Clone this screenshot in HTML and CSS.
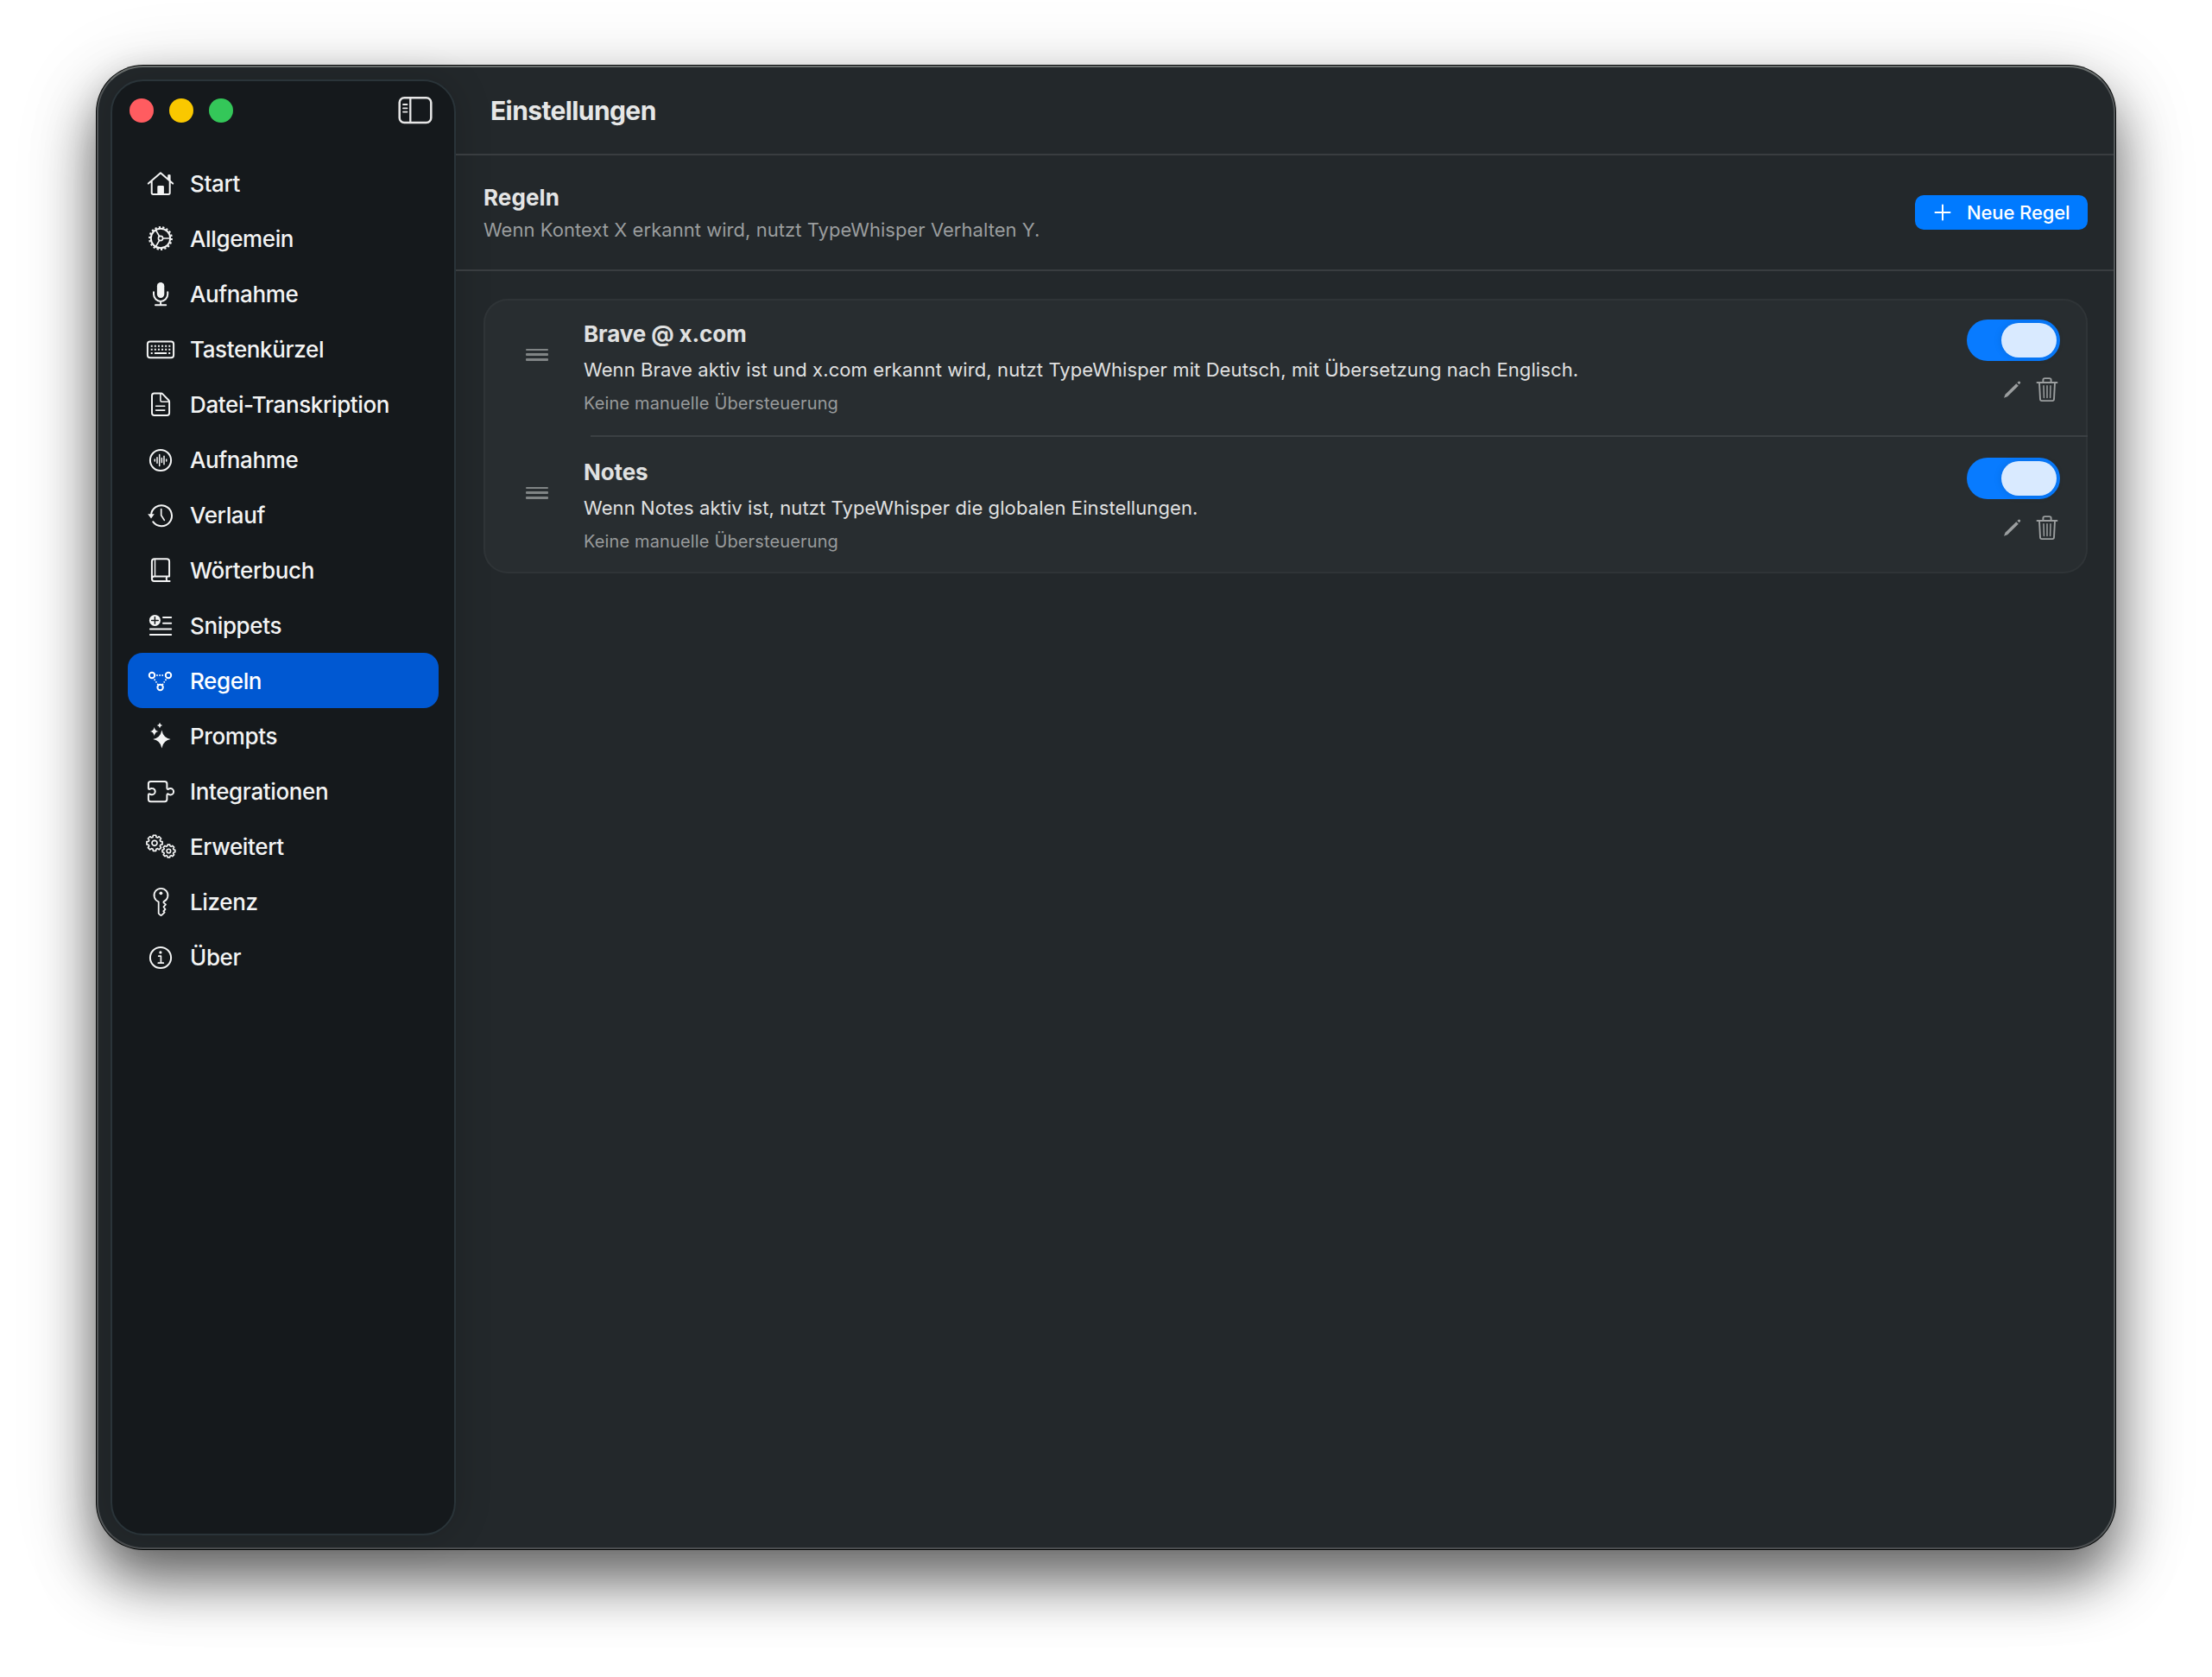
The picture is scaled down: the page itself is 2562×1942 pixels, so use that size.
FILE: index.html
```html
<!DOCTYPE html>
<html lang="de">

<head>
    <meta charset="UTF-8">
    <meta name="viewport" content="width=device-width, initial-scale=1.0">
    <title>Einstellungen</title>
    <link rel="stylesheet" href="styles.css">
</head>

<body>
    <div class="window">
        <aside class="sidebar">
            <div class="titlebar">
                <span class="light red"></span>
                <span class="light yellow"></span>
                <span class="light green"></span>
                <svg class="toggle-sidebar" viewBox="0 0 40 32">
                    <rect x="1.7" y="1.3" width="36.6" height="28.7" rx="5.5" stroke-width="2.5" />
                    <path d="M14.3 2v27.5" stroke-width="2.3" />
                    <path d="M6 9h4.5M6 13.3h4.5M6 17.6h4.5" stroke-width="1.8" />
                </svg>
            </div>

            <nav class="menu">
                <a class="item">
                    <svg class="icon" viewBox="0 0 40 40">
                        <path d="M5.8 20.6 20 8.3l14.2 12.3M9.7 18v13.2q0 1.7 1.7 1.7h17.6q1.7 0 1.7-1.7V18M29.9 16.5v-5.6" />
                        <path class="solid" d="M16.3 33v-8.7q0-1.2 1.2-1.2h5.2q1.2 0 1.2 1.2V33zM28.2 10.4h3.4v8l-3.4-3z" />
                    </svg>
                    <span>Start</span>
                </a>
                <a class="item">
                    <svg class="icon" viewBox="0 0 40 40">
                        <circle cx="20" cy="20" r="11.2" />
                        <circle class="teeth" cx="20" cy="20" r="12.9" pathLength="72" />
                        <circle cx="20" cy="20" r="2.6" stroke-width="1.6" />
                        <path d="M22.8 20h8.2M18.6 17.6l-4.2-7.2M18.6 22.4l-4.2 7.2" stroke-width="1.7" />
                    </svg>
                    <span>Allgemein</span>
                </a>
                <a class="item">
                    <svg class="icon" viewBox="0 0 40 40">
                        <rect class="solid" x="15.9" y="7" width="8.4" height="18" rx="4.2" />
                        <path d="M12 18.2v2.6a8.1 8.1 0 0 0 16.2 0v-2.6M20.1 29v4M14 33.2h12.2" />
                    </svg>
                    <span>Aufnahme</span>
                </a>
                <a class="item">
                    <svg class="icon" viewBox="0 0 40 40">
                        <rect x="4.9" y="11.6" width="30.2" height="18.6" rx="3" />
                        <path class="keys" d="M8.7 16.7h22.6M8.7 20.8h22.6" />
                        <path class="square" d="M8.7 25h2M12.9 25h14.2M29.2 25h2" />
                    </svg>
                    <span>Tastenkürzel</span>
                </a>
                <a class="item">
                    <svg class="icon" viewBox="0 0 40 40">
                        <path d="M12.5 7.6h8q1.2 0 2.2 1l6.4 6.6q1 1 1 2.2v12.9q0 2.7-2.7 2.7H12.7q-2.7 0-2.7-2.7v-20q0-2.7 2.5-2.7z" />
                        <path d="M19.9 8v7.7q0 1.6 1.6 1.6h8.3M14.6 22.3h10.2M14.6 27.1h10.2" stroke-width="1.6" />
                    </svg>
                    <span>Datei-Transkription</span>
                </a>
                <a class="item">
                    <svg class="icon" viewBox="0 0 40 40">
                        <circle cx="20" cy="21" r="12.1" />
                        <path d="M13.3 20v2M16 17.7v6.6M18.7 14.4v13.2M21.4 18.6v4.8M24 16.3v9.4M26.7 20v2" stroke-width="1.5" />
                    </svg>
                    <span>Aufnahme</span>
                </a>
                <a class="item">
                    <svg class="icon" viewBox="0 0 40 40">
                        <path d="M9 20.5a12 12 0 1 1 2.2 7.7" />
                        <path class="solid" d="M5.2 19.3h7.6L9 24.6z" />
                        <path d="M20.7 13.6v7.2l3.6 5.6" stroke-width="1.7" />
                    </svg>
                    <span>Verlauf</span>
                </a>
                <a class="item">
                    <svg class="icon" viewBox="0 0 40 40">
                        <path d="M30.6 32.9H12.5Q9.9 32.9 9.9 30V10.3q0-3 3-3h14.2q3 0 3 3v17.2H12.6q-2.7 0-2.7 2.7M27.3 27.8q-1.3 2.5 0 4.8" />
                        <path d="M13.5 8v19.3" stroke-width="1.5" />
                    </svg>
                    <span>Wörterbuch</span>
                </a>
                <a class="item">
                    <svg class="icon" viewBox="0 0 40 40">
                        <circle class="solid" cx="13.4" cy="14.4" r="6.5" />
                        <path class="cut" d="M13.4 10.6v7.6M9.6 14.4h7.6" />
                        <path d="M23 11.1h9.2M23 17.7h9.2M7.9 24.4h24.3M7.9 31h24.3" />
                    </svg>
                    <span>Snippets</span>
                </a>
                <a class="item active">
                    <svg class="icon" viewBox="0 0 40 40">
                        <circle cx="10" cy="14" r="3.2" />
                        <circle cx="29" cy="14" r="3.2" />
                        <circle cx="19.6" cy="28" r="3.2" />
                        <path class="dots" d="M16 14h8M13.2 19.3l3.6 5.2M26 19.3l-3.6 5.2" />
                    </svg>
                    <span>Regeln</span>
                </a>
                <a class="item">
                    <svg class="icon" viewBox="0 0 40 40">
                        <path class="solid" d="M21.4 13.6q1.6 9 10.2 10.4-8.600 1.400-10.200 10.400-1.600-9-10.200-10.400 8.600-1.400 10.200-10.400zM12.700 9.900q.8 4.400 4.900 5.100-4.100.7-4.900 5.100-.8-4.400-4.900-5.100 4.100-.7 4.900-5.100zM19 4.800q.5 2.800 3.200 3.200-2.700.4-3.200 3.200-.5-2.800-3.200-3.200 2.700-.4 3.200-3.200z" />
                    </svg>
                    <span>Prompts</span>
                </a>
                <a class="item">
                    <svg class="icon" viewBox="0 0 40 40">
                        <path d="M8.500 8.900h16.300q2.600 0 2.600 2.600v5.200q0 1.400 1.400 1.400 .9-1.100 2.600-1.100a3.700 3.700 0 0 1 0 7.400q-1.700 0-2.600-1.100-1.400 0-1.400 1.400v4.900q0 2.600-2.600 2.600H8.500q-2.600 0-2.600-2.600v-5.200q0-1.200 1.200-1.200 1.400 1.100 3 1a3.600 3.600 0 0 0 0-7.200q-1.600-.1-3 1-1.200 0-1.200-1.200v-5.300q0-2.600 2.600-2.600z" />
                    </svg>
                    <span>Integrationen</span>
                </a>
                <a class="item">
                    <svg class="icon" viewBox="0 0 40 40">
                        <defs>
                            <path id="cog" d="M9.060-1.600V1.600L6.920 1.980 6.300 3.490 7.540 5.280 5.280 7.540 3.490 6.300 1.980 6.920 1.600 9.060H-1.600L-1.980 6.920-3.490 6.300-5.280 7.540-7.540 5.280-6.300 3.490-6.920 1.980-9.060 1.600V-1.600L-6.920-1.980-6.300-3.490-7.540-5.280-5.280-7.540-3.490-6.300-1.980-6.920-1.600-9.060H1.600L1.980-6.920 3.490-6.300 5.280-7.540 7.540-5.280 6.300-3.490 6.920-1.980Z" />
                        </defs>
                        <g transform="translate(13 16.300)" stroke-width="1.700">
                            <use href="#cog" />
                            <circle r="3" />
                        </g>
                        <g transform="translate(29.400 25.500) scale(.82)" stroke-width="2">
                            <use href="#cog" />
                            <circle r="2.800" />
                        </g>
                    </svg>
                    <span>Erweitert</span>
                </a>
                <a class="item">
                    <svg class="icon" viewBox="0 0 40 40">
                        <path d="M17.700 20.300a8 8 0 1 1 5.800-.1v1.200l2.500 2-2.500 2.800 2 2.800-2.200 2.100 1.300 1.500-3.500 3.200q-.6.400-1.200 0l-2.200-2z" stroke-width="1.800" />
                        <circle class="solid" cx="20.400" cy="10.300" r="1.900" />
                    </svg>
                    <span>Lizenz</span>
                </a>
                <a class="item">
                    <svg class="icon" viewBox="0 0 40 40">
                        <circle cx="20" cy="21" r="12.100" />
                        <circle class="solid" cx="19.900" cy="14.900" r="1.600" />
                        <path d="M17.700 19.200h2.700v7.900M17.300 27.200h6" stroke-width="1.700" />
                    </svg>
                    <span>Über</span>
                </a>
            </nav>
        </aside>

        <main class="main">
            <header class="toolbar">
                <h1>Einstellungen</h1>
            </header>

            <section class="section-header">
                <div class="section-text">
                    <h2>Regeln</h2>
                    <p>Wenn Kontext X erkannt wird, nutzt TypeWhisper Verhalten Y.</p>
                </div>
                <button class="new-rule">
                    <svg viewBox="0 0 20 20"><path d="M10 1.500v17M1.500 10h17" /></svg>
                    <span>Neue Regel</span>
                </button>
            </section>

            <div class="rules">
                <div class="rule">
                    <div class="handle"><i></i><i></i><i></i></div>
                    <div class="rule-text">
                        <h3>Brave @ x.com</h3>
                        <p class="summary">Wenn Brave aktiv ist und x.com erkannt wird, nutzt TypeWhisper mit Deutsch, mit Übersetzung nach Englisch.</p>
                        <p class="note">Keine manuelle Übersteuerung</p>
                    </div>
                    <div class="controls">
                        <span class="switch"><span class="knob"></span></span>
                        <div class="actions">
                            <svg class="pencil" viewBox="0 0 22 22">
                                <path class="solid" d="M1 20.800l1.500-4L15.300 4.200l2.500 2.500L5 19.300z" />
                                <path class="solid" d="M16.400 3.100l1.200-1.200q1-1 2.100 0t.1 2.100l-1.200 1.200z" />
                            </svg>
                            <svg class="trash" viewBox="0 0 26 30">
                                <path d="M1.500 7h23M8.400 6.500V4q0-1.900 1.900-1.900h5.400q1.900 0 1.900 1.900v2.500M4 7.300l1 19q.1 1.800 1.900 1.800h12.200q1.800 0 1.900-1.800l1-19" stroke-width="1.900" />
                                <path d="M9 10.800l.4 13.600M13 10.800v13.600M17 10.800l-.4 13.600" stroke-width="1.500" />
                            </svg>
                        </div>
                    </div>
                </div>
                <hr class="separator">
                <div class="rule">
                    <div class="handle"><i></i><i></i><i></i></div>
                    <div class="rule-text">
                        <h3>Notes</h3>
                        <p class="summary">Wenn Notes aktiv ist, nutzt TypeWhisper die globalen Einstellungen.</p>
                        <p class="note">Keine manuelle Übersteuerung</p>
                    </div>
                    <div class="controls">
                        <span class="switch"><span class="knob"></span></span>
                        <div class="actions">
                            <svg class="pencil" viewBox="0 0 22 22">
                                <path class="solid" d="M1 20.800l1.500-4L15.300 4.200l2.500 2.500L5 19.300z" />
                                <path class="solid" d="M16.400 3.100l1.200-1.200q1-1 2.100 0t.1 2.100l-1.200 1.200z" />
                            </svg>
                            <svg class="trash" viewBox="0 0 26 30">
                                <path d="M1.500 7h23M8.400 6.500V4q0-1.900 1.900-1.900h5.400q1.900 0 1.900 1.900v2.500M4 7.300l1 19q.1 1.800 1.900 1.800h12.200q1.800 0 1.900-1.800l1-19" stroke-width="1.900" />
                                <path d="M9 10.800l.4 13.600M13 10.800v13.600M17 10.800l-.4 13.600" stroke-width="1.500" />
                            </svg>
                        </div>
                    </div>
                </div>
            </div>
        </main>
    </div>
</body>

</html>
```
FILE: styles.css
```css
/* Global styles */

* {
    box-sizing: border-box;
}

body {
    margin: 0;
    padding: 76px 112px;
    height: 1942px;
    overflow: hidden;
    background-color: #fff;
    font-family: Inter, "Liberation Sans", sans-serif;
    color: #e4e5e5;
}

h1,
h2,
h3,
p {
    margin: 0;
}

svg {
    display: block;
    fill: none;
    stroke: currentColor;
    stroke-width: 2;
    stroke-linecap: round;
    stroke-linejoin: round;
}

.solid {
    fill: currentColor;
    stroke: none;
}
/* Window */

.window {
    display: flex;
    width: 2338px;
    height: 1718px;
    border: 2px solid #54585a;
    border-top-color: #6b706f;
    border-bottom-color: #4b4e50;
    border-radius: 54px;
    background-color: #23282b;
    box-shadow: 0 0 0 1px #060808, 0 36px 64px rgba(0, 0, 0, 0.55), 0 20px 100px rgba(0, 0, 0, 0.16);
}
/* Sidebar */

.sidebar {
    flex: none;
    width: 400px;
    margin: 14px 0 14px 14px;
    padding: 0 18px;
    border: 2px solid #2a3439;
    border-radius: 38px;
    background-color: #15191c;
    box-shadow: 0 0 44px rgba(0, 0, 0, 0.16);
}

.titlebar {
    display: flex;
    align-items: center;
    gap: 18px;
    height: 86px;
    padding: 0 7px 18px 2px;
}

.light {
    width: 28px;
    height: 28px;
    border-radius: 50%;
}

.red {
    background-color: #ff5c60;
}

.yellow {
    background-color: #fac800;
}

.green {
    background-color: #34c759;
}

.toggle-sidebar {
    width: 40px;
    height: 32px;
    margin-left: auto;
    color: #e6e6e6;
}

.item {
    display: flex;
    align-items: center;
    gap: 14px;
    height: 64px;
    padding-left: 18px;
    border-radius: 17px;
    color: #f3f4f4;
    font-size: 26px;
    font-weight: 500;
    line-height: 64px;
    letter-spacing: -0.37px;
}

.item span {
    padding-top: 2px;
}

.active {
    background-color: #0058d2;
    color: #fff;
}

.icon {
    width: 40px;
    height: 40px;
    overflow: visible;
}

.teeth {
    stroke-width: 2;
    stroke-linecap: butt;
    stroke-dasharray: 2 2;
}

.keys {
    stroke-width: 2;
    stroke-linecap: butt;
    stroke-dasharray: 2 2.12;
}

.square {
    stroke-width: 2;
    stroke-linecap: butt;
}

.dots {
    stroke-width: 1.9;
    stroke-dasharray: 0 3.1;
}

.cut {
    stroke: #15191c;
    stroke-width: 1.5;
}
/* Main area */

.main {
    flex: 1;
}

.toolbar {
    display: flex;
    align-items: center;
    height: 102px;
    padding-left: 40px;
    border-bottom: 2px solid #393d40;
}

.toolbar h1 {
    font-size: 30px;
    font-weight: 700;
    line-height: 40px;
    letter-spacing: -0.6px;
    color: #e6e7e7;
}

.section-header {
    display: flex;
    align-items: center;
    justify-content: space-between;
    height: 134px;
    padding: 0 30px 0 32px;
    border-bottom: 2px solid #393d40;
}

.section-text h2 {
    padding-top: 1px;
    font-size: 26px;
    font-weight: 700;
    line-height: 39px;
    letter-spacing: 0.1px;
}

.section-text p {
    font-size: 22px;
    line-height: 36px;
    letter-spacing: 0.04px;
    color: #9a9d9e;
}

.new-rule {
    display: flex;
    align-items: center;
    gap: 18px;
    width: 200px;
    height: 40px;
    padding: 0 0 0 22px;
    border: none;
    border-radius: 10px;
    background-color: #007aff;
    color: #fff;
    font: 500 22px/40px Inter, "Liberation Sans", sans-serif;
    letter-spacing: -0.1px;
}

.new-rule svg {
    width: 20px;
    height: 20px;
}
/* Rule list */

.rules {
    margin: 32px 30px 0 32px;
    border-radius: 28px;
    background-color: #282d30;
    box-shadow: inset 0 0 0 2px #2f3437;
}

.rule {
    display: flex;
    height: 158px;
    padding: 0 32px 0 49px;
}

.handle {
    display: flex;
    flex-direction: column;
    gap: 3.4px;
    width: 26px;
    margin: 57.6px 41px 0 0;
}

.handle i {
    height: 2.5px;
    border-radius: 1px;
    background-color: #808485;
}

.rule-text {
    flex: 1;
    padding-top: 23px;
}

.rule-text h3 {
    font-size: 26px;
    font-weight: 700;
    line-height: 36px;
    letter-spacing: -0.12px;
    color: #e0e1e1;
}

.summary {
    margin-top: 7px;
    font-size: 22px;
    line-height: 32px;
    letter-spacing: 0.095px;
    color: #e0e1e1;
}

.note {
    margin-top: 9px;
    font-size: 20px;
    line-height: 28px;
    letter-spacing: 0.14px;
    color: #989b9c;
}

.controls {
    display: flex;
    flex-direction: column;
    align-items: flex-end;
    padding-top: 24px;
}

.switch {
    display: flex;
    justify-content: flex-end;
    width: 108px;
    height: 48px;
    padding: 4px;
    border-radius: 24px;
    background-color: #087bff;
}

.knob {
    width: 64px;
    height: 40px;
    border-radius: 20px;
    background-color: #d9eaff;
    box-shadow: 0 0 10px rgba(0, 0, 0, 0.12);
}

.actions {
    display: flex;
    align-items: center;
    gap: 16px;
    margin: 18px 2px 0 0;
    color: #9b9e9f;
}

.pencil {
    width: 22px;
    height: 22px;
}

.trash {
    width: 26px;
    height: 30px;
}

.separator {
    height: 2px;
    margin: 0 0 0 124px;
    border: none;
    background-color: #3b4043;
}
```
